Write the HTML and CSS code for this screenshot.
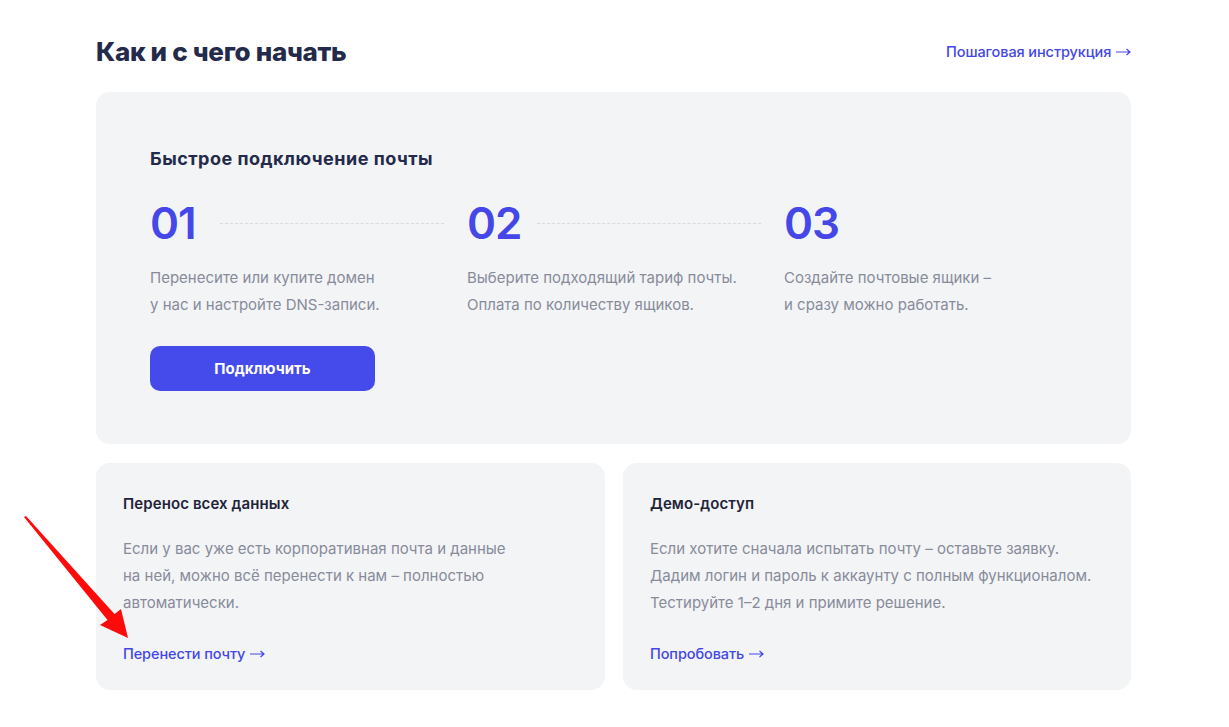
FILE: index.html
```html
<!DOCTYPE html>
<html lang="ru">
<head>
<meta charset="utf-8">
<link rel="stylesheet" href="styles.css">
</head>
<body>
<div class="page">
  <header class="head">
    <h1 class="title">Как и с чего начать</h1>
    <a class="link head-link" href="#">Пошаговая инструкция <svg class="arr" width="15" height="8" viewBox="0 0 15 8"><path d="M0 4H14M10.5 1L14 4L10.5 7" fill="none" stroke="currentColor" stroke-width="1.2"/></svg></a>
  </header>

  <section class="card big">
    <h2 class="big-title">Быстрое подключение почты</h2>
    <div class="steps">
      <div class="step">
        <div class="num-row"><span class="num">01</span><span class="dash"></span></div>
        <p class="text">Перенесите или купите домен<br>у нас и настройте DNS-записи.</p>
      </div>
      <div class="step">
        <div class="num-row"><span class="num">02</span><span class="dash"></span></div>
        <p class="text">Выберите подходящий тариф почты.<br>Оплата по количеству ящиков.</p>
      </div>
      <div class="step">
        <div class="num-row"><span class="num">03</span></div>
        <p class="text">Создайте почтовые ящики –<br>и сразу можно работать.</p>
      </div>
    </div>
    <button class="btn">Подключить</button>
  </section>

  <div class="row">
    <section class="card small">
      <h3 class="small-title">Перенос всех данных</h3>
      <p class="text">Если у вас уже есть корпоративная почта и данные<br>на ней, можно всё перенести к нам – полностью<br>автоматически.</p>
      <a class="link" href="#">Перенести почту <svg class="arr" width="15" height="8" viewBox="0 0 15 8"><path d="M0 4H14M10.5 1L14 4L10.5 7" fill="none" stroke="currentColor" stroke-width="1.2"/></svg></a>
    </section>
    <section class="card small">
      <h3 class="small-title">Демо-доступ</h3>
      <p class="text">Если хотите сначала испытать почту – оставьте заявку.<br>Дадим логин и пароль к аккаунту с полным функционалом.<br>Тестируйте 1–2 дня и примите решение.</p>
      <a class="link" href="#">Попробовать <svg class="arr" width="15" height="8" viewBox="0 0 15 8"><path d="M0 4H14M10.5 1L14 4L10.5 7" fill="none" stroke="currentColor" stroke-width="1.2"/></svg></a>
    </section>
  </div>
</div>

<svg class="arrow" width="140" height="140" viewBox="0 505 140 140" xmlns="http://www.w3.org/2000/svg">
  <polygon points="24,517 26,516 114.5,614 121,609 128,638 100,625 107.5,620" fill="#ff0a0a"/>
</svg>
</body>
</html>
```

FILE: styles.css
```css
* { box-sizing: border-box; }
html, body { margin: 0; padding: 0; background: #fff; }
body {
  font-family: "Inter", "Noto Sans", sans-serif;
  color: #1f2338;
  position: relative;
}
.page {
  width: 1035px;
  margin-left: 96px;
  padding-top: 34px;
}
.head {
  display: flex;
  justify-content: space-between;
  align-items: center;
  height: 34px;
}
.title {
  margin: 0;
  font-size: 26px;
  font-weight: 800;
  color: #232a4a;
  letter-spacing: -0.3px;
}
.link {
  color: #4446e6;
  text-decoration: none;
  font-size: 14.5px;
  font-weight: 500;
  letter-spacing: -0.1px;
  white-space: nowrap;
}
.arr { vertical-align: 1px; margin-left: 1px; }
.card {
  background: #f3f4f6;
  border-radius: 14px;
}
.big {
  margin-top: 24px;
  height: 352px;
  padding: 55px 54px 0;
}
.big-title {
  margin: 0;
  font-size: 18px;
  font-weight: 700;
  color: #232a4a;
  line-height: 24px;
  letter-spacing: 0.5px;
}
.steps {
  display: grid;
  grid-template-columns: 317px 317px 1fr;
  margin-top: 27px;
}
.num-row {
  display: flex;
  align-items: center;
  height: 50px;
}
.num {
  font-size: 44px;
  font-weight: 600;
  color: #4547e8;
  letter-spacing: -1px;
  line-height: 50px;
  width: 70px;
}
.dash {
  width: 224px;
  height: 0;
  border-top: 1.5px dashed #d8dae0;
}
.text {
  margin: 0;
  font-size: 15px;
  line-height: 27px;
  color: #878b9a;
  letter-spacing: 0;
}
.step .text { margin-top: 16px; }
.btn {
  margin-top: 28px;
  width: 225px;
  height: 45px;
  border: 0;
  border-radius: 10px;
  background: #454aeb;
  color: #fff;
  font-family: inherit;
  font-size: 15px;
  font-weight: 700;
  letter-spacing: 0;
}
.row {
  display: grid;
  grid-template-columns: 509px 508px;
  gap: 18px;
  margin-top: 19px;
}
.small {
  height: 227px;
  padding: 30px 27px 0;
}
.small-title {
  margin: 0;
  font-size: 15px;
  font-weight: 600;
  line-height: 22px;
  color: #1f2338;
  letter-spacing: 0.1px;
}
.small .text { margin-top: 20px; }
.small .link { display: inline-block; margin-top: 29px; }
.arrow {
  position: absolute;
  left: 0;
  top: 505px;
}
```
